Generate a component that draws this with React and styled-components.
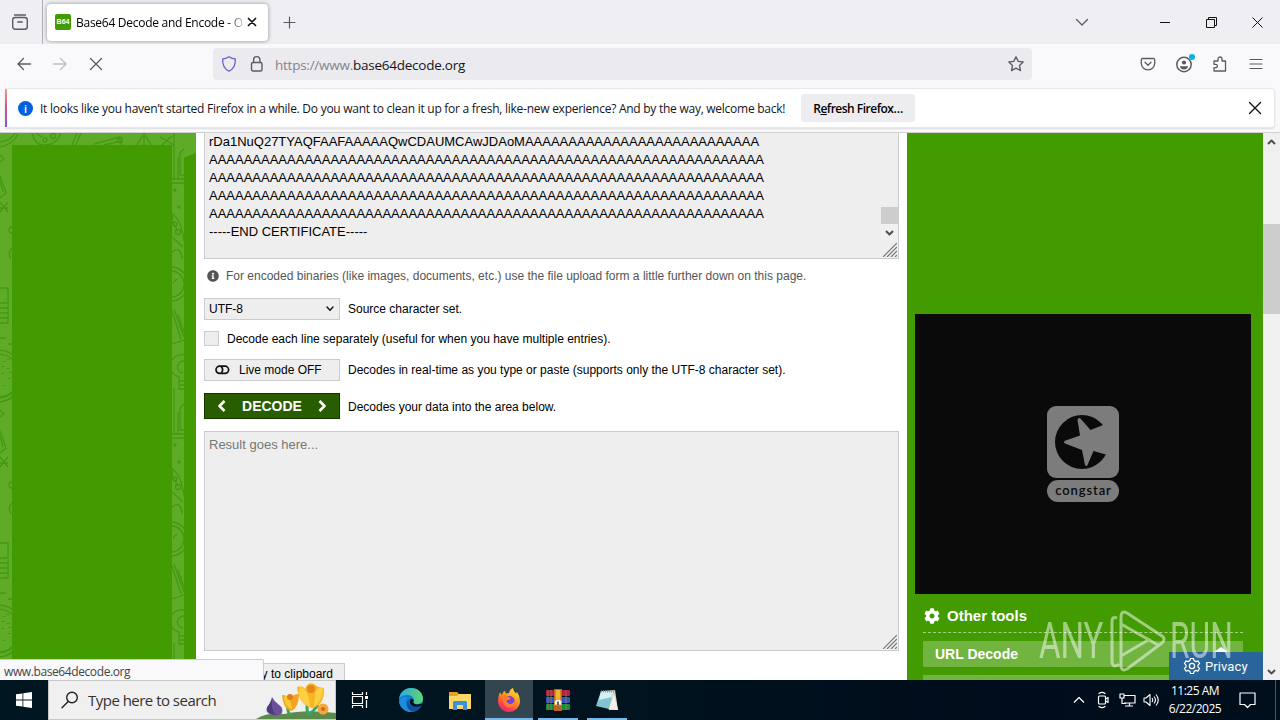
import styled, { createGlobalStyle } from "styled-components"
import { FaInfoCircle, FaCog } from "react-icons/fa"

const LINE = "A".repeat(64)
const CERT = [
  "rDa1NuQ27TYAQFAAFAAAAAQwCDAUMCAwJDAoM" + "A".repeat(27),
  LINE,
  LINE,
  LINE,
  LINE,
  "-----END CERTIFICATE-----",
]

export default function App() {
  return (
    <>
      <GlobalStyle />
      <Screen>
        <TabBar />
        <NavBar />
        <Notification />
        <Viewport>
          <LeftRail />
          <DecodeForm />
          <RightRail />
          <Scrollbar>
            <Arrow up />
            <Thumb />
            <Arrow />
          </Scrollbar>
          <StatusBubble>www.base64decode.org</StatusBubble>
          <Watermark />
        </Viewport>
        <Taskbar />
      </Screen>
    </>
  )
}

function Stroke({ w, h, d, color = "#5b5b66", sw = 1.3, children, cap = "round" }) {
  return (
    <svg width={w} height={h} viewBox={`0 0 ${w} ${h}`} fill="none" stroke={color} strokeWidth={sw} strokeLinecap={cap} strokeLinejoin="round">
      {d && <path d={d} />}
      {children}
    </svg>
  )
}

function Arrow({ up }) {
  return (
    <ArrowBox>
      <Stroke w={9} h={6} d={up ? "M1 5L4.500 1.500L8 5" : "M1 1L4.500 4.500L8 1"} color="#505050" sw={2} cap="butt" />
    </ArrowBox>
  )
}

function TabBar() {
  return (
    <Tabs>
      <FirefoxView>
        <Stroke w={18} h={18} sw={1.4}>
          <path d="M3.500 2H14.500" />
          <rect x="1.700" y="4.500" width="14.600" height="11.800" rx="2.500" />
          <path d="M6.800 9H11.200" />
        </Stroke>
      </FirefoxView>
      <Tab>
        <Favicon>B64</Favicon>
        <TabTitle>Base64 Decode and Encode - O</TabTitle>
        <Stroke w={10} h={10} d="M1.500 1.500L8.500 8.500M8.500 1.500L1.500 8.500" color="#15141a" sw={1.7} />
      </Tab>
      <NewTab>
        <Stroke w={13} h={13} d="M6.500 1V12M1 6.500H12" sw={1.2} />
      </NewTab>
      <ListTabs>
        <Stroke w={14} h={9} d="M1.500 1.500L7 7L12.500 1.500" />
      </ListTabs>
      <WindowButton>
        <Stroke w={11} h={11} d="M0 5.500H10" color="#111" sw={1} cap="butt" />
      </WindowButton>
      <WindowButton>
        <Stroke w={11} h={11} d="M.5 2.500H8.500V10.500H.5ZM2.500 2.500V.5H10.500V8.500H8.500" color="#111" sw={1} cap="butt" />
      </WindowButton>
      <WindowButton>
        <Stroke w={11} h={11} d="M.5 .5L10.500 10.500M10.500 .5L.5 10.500" color="#111" sw={1} cap="butt" />
      </WindowButton>
    </Tabs>
  )
}

function NavBar() {
  return (
    <Nav>
      <NavButton>
        <Stroke w={16} h={14} d="M7.500 1.500L2 7L7.500 12.500M2 7H14.500" />
      </NavButton>
      <NavButton>
        <Stroke w={16} h={14} d="M8.500 1.500L14 7L8.500 12.500M14 7H1.500" color="#bdbdc4" />
      </NavButton>
      <NavButton>
        <Stroke w={14} h={14} d="M1.500 1.500L12.500 12.500M12.500 1.500L1.500 12.500" />
      </NavButton>
      <UrlBar>
        <Stroke w={16} h={18} d="M8 1.700C5.800 3.200 3.800 3.800 1.700 3.900C1.300 9.500 3.300 13.800 8 16.300C12.700 13.800 14.700 9.500 14.300 3.900C12.200 3.800 10.200 3.200 8 1.700Z" color="#6a60c4" />
        <Lock>
          <Stroke w={14} h={18} sw={1.4}>
            <rect x="1.500" y="7.500" width="10.500" height="8.500" rx="1.500" />
            <path d="M3.600 7.500V4.800a3.150 3.150 0 0 1 6.300 0V7.500" />
          </Stroke>
        </Lock>
        <Url>
          <span>https://www.</span>base64decode.org
        </Url>
        <Stroke w={18} h={18} d="M9 1.800L11.200 6.400L16.200 7L12.500 10.500L13.500 15.600L9 13.100L4.500 15.600L5.500 10.500L1.800 7L6.800 6.400Z" />
      </UrlBar>
      <NavTools>
        <NavButton>
          <Stroke w={16} h={16}>
            <path d="M2.500 2.500H13.500a1.200 1.200 0 0 1 1.200 1.200V7.200a6.700 6.700 0 0 1-13.400 0V3.700a1.200 1.200 0 0 1 1.200-1.200Z" />
            <path d="M5 6.300L8 9.200L11 6.300" />
          </Stroke>
        </NavButton>
        <NavButton>
          <Account>
            <Stroke w={18} h={18} sw={1.5}>
              <circle cx="9" cy="9.500" r="7.200" />
              <circle cx="9" cy="7.500" r="2.100" fill="#5b5b66" stroke="none" />
              <path d="M4.800 11.200H13.200C12.800 13.500 11 14.500 9 14.500S5.200 13.500 4.800 11.200Z" fill="#5b5b66" stroke="none" />
            </Stroke>
            <Dot />
          </Account>
        </NavButton>
        <NavButton>
          <Stroke w={16} h={18} d="M2 6H6V4a2 2 0 0 1 4 0V6H13.500V16H2V12.700H3.700a1.700 1.700 0 0 0 0-3.400H2Z" />
        </NavButton>
        <NavButton>
          <Stroke w={14} h={12} d="M1 1.500H13M1 6H13M1 10.500H13" sw={1.2} />
        </NavButton>
      </NavTools>
    </Nav>
  )
}

function Notification() {
  return (
    <NotificationArea>
      <NotificationBar>
        <InfoDot>i</InfoDot>
        <Message>
          It looks like you haven’t started Firefox in a while. Do you want to clean it up for a fresh, like-new experience? And by the way, welcome back!
        </Message>
        <RefreshButton>
          R<u>e</u>fresh Firefox…
        </RefreshButton>
        <Stroke w={14} h={14} d="M1.500 1.500L12.500 12.500M12.500 1.500L1.500 12.500" color="#15141a" sw={1.4} />
      </NotificationBar>
    </NotificationArea>
  )
}

// one tile of the school doodles, repeated down the page every 255px
function Doodles({ y }) {
  return (
    <g transform={`translate(0 ${y})`}>
      <path d="M-2 9Q10 9 15 0M-2 14Q12 13 18 1M0 22L4 26L0 29M0 43L6 60L0 65M0 48L3 59M0 69L8 79M8 69L0 79M0 75H8" />
      <circle cx="12" cy="97" r="3" />
      <path d="M12 115Q7 120 11 126M0 155H8V170H0M0 175H8M0 180H8M0 185H8M0 190H8M8 172V190M0 205H6M8 211H12" />
      <circle cx="-2" cy="243" r="22" />
      <circle cx="-2" cy="243" r="26" />
      <path d="M4 228v1M8 235v1M3 240v1M9 245v1M4 252v1M8 226v1M10 239v1M3 233v1" strokeWidth="2.500" />
      <path d="M174 0V46M178 24V46M184 16L180 20V42H184M172 46H184M172 50H184" />
      <circle cx="175" cy="57" r="1" fill="#459b10" />
      <circle cx="179" cy="74" r="1" fill="#459b10" />
      <path d="M173 82Q181 86 184 108M172 88L178 98M172 104L183 114M172 119Q181 112 182 126M173 80L171 97" />
      <circle cx="178" cy="99" r="2.500" />
      <circle cx="175" cy="91" r="2" />
      <circle cx="171" cy="151" r="17" />
      <circle cx="171" cy="151" r="13" />
      <path d="M173 150L177 146M172 178L181 206M174 176L184 204M172 211L184 207M178 182L184 199" />
      <path d="M184 222A11 11 0 0 0 179 244V256H184M184 228A6 6 0 0 0 183 240M180 248H184M180 252H184" />
    </g>
  )
}

function LeftRail() {
  return (
    <Rail>
      <RailArt width="196" height="547" viewBox="0 0 196 547">
        <path d="M0 0H196V20L184 25V547H0Z" fill="#5eab28" />
        <g fill="none" stroke="#459814" strokeWidth="1.300">
          <Doodles y={0} />
          <Doodles y={255} />
          <Doodles y={510} />
          <path d="M32 0Q35 13 46 12T61 0M36 0L42 4M72 12L77 0M76 12L81 0M94 11L119 4L122 12M104 12L121 8M137 12L144 0L151 12M144 3V12M160 4L174 12M172 3L162 12" />
          <circle cx="45" cy="7" r="2" />
          <circle cx="53" cy="3" r="2.500" />
          <circle cx="120" cy="7" r="2.500" />
        </g>
        <path d="M184 25L196 20V547H184Z" fill="#429b00" />
      </RailArt>
      <AdSlot />
    </Rail>
  )
}

function Grip() {
  return (
    <GripBox>
      <Stroke w={14} h={14} d="M0 14L14 0M4 14L14 4M8 14L14 8M12 14L14 12" color="#777" sw={1.2} cap="butt" />
    </GripBox>
  )
}

function DecodeForm() {
  return (
    <Content>
      <SourceArea>
        <SourceText>
          {CERT.map((line, i) => (
            <div key={i}>{line}</div>
          ))}
        </SourceText>
        <SourceScroll>
          <SourceThumb />
          <Arrow />
        </SourceScroll>
        <Grip />
      </SourceArea>
      <Hint>
        <FaInfoCircle size={12} />
        For encoded binaries (like images, documents, etc.) use the file upload form a little further down on this page.
      </Hint>
      <Row>
        <Control>
          UTF-8
          <Stroke w={8} h={6} d="M1 1L4 4.200L7 1" color="#111" sw={1.4} />
        </Control>
        Source character set.
      </Row>
      <CheckRow>
        <Checkbox />
        Decode each line separately (useful for when you have multiple entries).
      </CheckRow>
      <Row>
        <Control $live>
          <Stroke w={15} h={10} color="#111" sw={1.700}>
            <rect x="1" y="1.200" width="12.600" height="7.200" rx="3.600" />
            <path d="M6.300 1.600Q9 4.800 6.300 8" />
          </Stroke>
          Live mode OFF
        </Control>
        Decodes in real-time as you type or paste (supports only the UTF-8 character set).
      </Row>
      <Row>
        <DecodeButton>
          <Stroke w={10} h={14} d="M7.500 2L2.500 7L7.500 12" color="#fff" sw={2.500} cap="butt" />
          DECODE
          <Stroke w={10} h={14} d="M2.500 2L7.500 7L2.500 12" color="#fff" sw={2.500} cap="butt" />
        </DecodeButton>
        <ButtonNote>Decodes your data into the area below.</ButtonNote>
      </Row>
      <ResultArea>
        Result goes here...
        <Grip />
      </ResultArea>
      <CopyButton>Copy to clipboard</CopyButton>
    </Content>
  )
}

function RightRail() {
  return (
    <Sidebar>
      <Banner>
        <svg width="72" height="96" viewBox="0 0 72 96">
          <rect width="72" height="72" rx="9" fill="#7c7c7c" />
          <circle cx="35" cy="36" r="27" fill="#0a0a0a" />
          <path d="M57.500 18.500L62 30V44L60.500 49L46.500 45L40.500 59Q39.500 61 38 59L35 44L18 37.500Q16 36 18 34.800L33 29.500L30.500 14Q31 11 33.500 12.500L43.500 24Z" fill="#7c7c7c" />
          <rect y="74" width="72" height="22" rx="11" fill="#7c7c7c" />
        </svg>
        <BannerName>congstar</BannerName>
      </Banner>
      <ToolsTitle>
        <FaCog size={16} />
        Other tools
      </ToolsTitle>
      <ToolLink>URL Decode</ToolLink>
      <ToolLink />
      <Privacy>
        <Stroke w={18} h={18} color="#fff" sw={1.200}>
          <path d="M7.500 1.500H10.500L11.100 3.600L13 4.600L15 3.900L16.600 6.500L15 8V10L16.600 11.500L15 14.100L13 13.400L11.100 14.400L10.500 16.500H7.500L6.900 14.400L5 13.400L3 14.100L1.400 11.500L3 10V8L1.400 6.500L3 3.900L5 4.600L6.900 3.600Z" />
          <circle cx="9" cy="9" r="2.600" />
        </Stroke>
        Privacy
      </Privacy>
    </Sidebar>
  )
}

function Watermark() {
  return (
    <Brand>
      <BrandWord $scale={0.66}>ANY</BrandWord>
      <svg width="60" height="64" viewBox="0 0 60 64" fill="none" stroke="#fff" strokeWidth="3" strokeLinejoin="round">
        <path d="M11 9Q6 7 6 12V52Q6 59 12 56L13 55" />
        <path d="M15 47V8Q15 1 21 4L56 27M15 15L52 36M56 27Q60 30 56 34L21 60Q15 63 15 56V47L44 30" strokeWidth="3" />
      </svg>
      <BrandWord $scale={0.635}>RUN</BrandWord>
    </Brand>
  )
}

function Taskbar() {
  return (
    <Bar>
      <Start>
        <svg width="16" height="16" viewBox="0 0 16 16" fill="#fff">
          <path d="M0 2.300L6.500 1.400V7.600H0ZM7.300 1.300L16 0V7.600H7.300ZM0 8.400H6.500V14.600L0 13.700ZM7.300 8.400H16V16L7.300 14.700Z" />
        </svg>
      </Start>
      <Search>
        <Stroke w={18} h={18} color="#222" sw={1.400}>
          <circle cx="11" cy="6.500" r="5.300" />
          <path d="M7.200 10.500L1 16.800" />
        </Stroke>
        <span>Type here to search</span>
        <Crocus />
      </Search>
      <TaskView>
        <Stroke w={18} h={16} color="#fff" sw={1.200} cap="butt">
          <path d="M1.500 0V2.500H11.500V0M1.500 16V13.500H11.500V16M15.500 0V3M15.500 8V16" />
          <rect x="1.500" y="4.500" width="10" height="7" />
          <path d="M14 5.500H17" strokeWidth="3" />
        </Stroke>
      </TaskView>
      <Apps>
        <AppButton><Edge /></AppButton>
        <AppButton><Folder /></AppButton>
        <AppButton $active $bar={48}><Firefox /></AppButton>
        <AppButton $bar={40}><Rar /></AppButton>
        <AppButton $bar={40}><Notepad /></AppButton>
      </Apps>
      <Tray>
        <TrayIcon>
          <Stroke w={12} h={8} d="M1 6.500L6 1.500L11 6.500" color="#fff" sw={1.200} cap="butt" />
        </TrayIcon>
        <TrayIcon>
          <Stroke w={14} h={18} color="#fff" sw={1.200}>
            <rect x="2.500" y="5" width="7" height="8" rx="1" />
            <path d="M9.500 8L12 6.500V11.500L9.500 10M3 2.500Q6 .3 9 2.500M3 15.500Q6 17.700 9 15.500" />
          </Stroke>
        </TrayIcon>
        <TrayIcon>
          <Stroke w={17} h={14} color="#fff" sw={1.200} cap="butt">
            <path d="M5 2.500H16V10H5M10.500 10V13M6 13H14M3 5V10.500H7" />
            <rect x="1" y="1" width="4" height="4" />
          </Stroke>
        </TrayIcon>
        <TrayIcon>
          <Stroke w={17} h={14} color="#fff" sw={1.100} cap="butt">
            <path d="M1 5H3L7 1.500V12.500L3 9H1ZM9 5Q10.500 7 9 9M11 3.500Q14 7 11 10.500M13 1.500Q17.500 7 13 12.500" />
          </Stroke>
        </TrayIcon>
      </Tray>
      <Clock>
        <div>11:25 AM</div>
        <div>6/22/2025</div>
      </Clock>
      <ActionCenter>
        <Stroke w={17} h={17} d="M1 1H16V12.500H11.500L8.500 15.500L5.500 12.500H1Z" color="#fff" sw={1.200} />
      </ActionCenter>
      <ShowDesktop />
    </Bar>
  )
}

function Crocus() {
  return (
    <CrocusArt width="80" height="38" viewBox="0 0 80 38">
      <path d="M0 38Q12 31 28 33Q50 28 80 32V38Z" fill="#5c8a4c" />
      <path d="M34 34Q30 28 33 24M52 34Q50 26 52 18M52 34Q58 30 62 24" stroke="#3fa35a" strokeWidth="3" fill="none" />
      <path d="M16 16Q18 20 22 23Q29 28 25 33Q19 37 12 32Q8 27 14 23Z" fill="#6b4f9b" />
      <path d="M16 18Q15 27 19 34Q10 32 11 27Z" fill="#4e3a7d" />
      <path d="M26 14Q31 14 34 18Q37 13 43 13Q43 27 35 30Q27 28 26 14Z" fill="#f4a51c" />
      <path d="M29 14Q35 18 36 28Q29 26 28 17Z" fill="#fbc934" />
      <circle cx="34" cy="16" r="3" fill="#e07d1d" />
      <path d="M41 6Q47 4 49 8Q52 0 58 3Q62 7 68 7Q69 23 57 27Q43 25 41 6Z" fill="#f8b51f" />
      <path d="M44 5Q54 11 54 26Q43 22 43 10ZM59 12Q61 6 67 6Q67 20 58 26Z" fill="#fdd043" />
      <circle cx="55" cy="8" r="4" fill="#e7841d" />
      <circle cx="67" cy="28" r="5.500" fill="#f3a63c" />
      <circle cx="67" cy="28" r="2" fill="#c9681e" />
    </CrocusArt>
  )
}

function Edge() {
  return (
    <svg width="24" height="24" viewBox="0 0 24 24">
      <defs>
        <linearGradient id="edgeTop" x1="0" x2="1">
          <stop offset="0" stopColor="#2aa7e8" />
          <stop offset="1" stopColor="#5fd86a" />
        </linearGradient>
      </defs>
      <circle cx="12" cy="12" r="12" fill="#1479d0" />
      <path d="M0 11C1 4 6 0 12 0C19 0 24 5 24 10.500C24 14 21 16 18 16C15 16 13.500 15 14.500 13.500C16 11 13 7 9 7C5 7 1 8.500 0 11Z" fill="url(#edgeTop)" />
      <path d="M9 9.500C5 13 7 21 15 23.500C8 25 2 21 .3 15C0 11 4 8 9 9.500Z" fill="#1b8ee0" />
      <path d="M10 11C8 16 13 20 22 18C19 23 15 24 13 23.500C7 21 6 15 10 11Z" fill="#12509c" />
      <path d="M12 10.500Q16 11 14.300 14.200Q14.500 16 18 16.500L23.500 15.500L22.500 18Q14 20 11.500 16Q9.500 13 12 10.500Z" fill="#00151f" />
    </svg>
  )
}

function Folder() {
  return (
    <svg width="22" height="19" viewBox="0 0 22 19">
      <path d="M0 1H8L10 3H22V18H0Z" fill="#e8a21b" />
      <path d="M0 5H8L10 3H22V18H0Z" fill="#fcd667" />
      <path d="M4 18V11.500Q4 10 5.500 10H16.500Q18 10 18 11.500V19H14V14H8V19H4Z" fill="#3d91d0" />
    </svg>
  )
}

function Firefox() {
  return (
    <svg width="24" height="24" viewBox="0 0 24 24">
      <defs>
        <linearGradient id="fox" x1=".8" y1="0" x2=".25" y2="1">
          <stop offset="0" stopColor="#ffe83c" />
          <stop offset=".45" stopColor="#ff9420" />
          <stop offset=".8" stopColor="#fb3b52" />
          <stop offset="1" stopColor="#e2257e" />
        </linearGradient>
      </defs>
      <path d="M3 4Q4 6 5 7Q6 3 8 3L9 5.500Q11 5 12 5Q13 1 16 0Q16 3 19 5.500L20 4Q23 8 23 13C23 19 18 24 12 24S1 19 1 13Q1 8 3 4Z" fill="url(#fox)" />
      <circle cx="12.500" cy="13" r="5" fill="#7543d8" />
      <path d="M5 9Q10 7 14 10.500Q12 12 10 12Q9 15 13 16Q16 16 17.500 13Q18 19 12.500 19.500Q6 19 5 9Z" fill="#ff7a30" />
    </svg>
  )
}

function Rar() {
  return (
    <svg width="24" height="22" viewBox="0 0 24 22">
      <rect y="1" width="24" height="6" rx="1" fill="#b3203a" />
      <rect y="8" width="24" height="6" rx="1" fill="#3554b8" />
      <rect y="15" width="24" height="6" rx="1" fill="#1d8a35" />
      <path d="M2 1V21M5 1V21M20 1V21" stroke="#9c9470" strokeWidth=".6" />
      <rect x="8" y="0" width="8" height="22" fill="#b9622a" />
      <rect x="9.500" y="1" width="5" height="10" fill="#f0b52d" />
      <path d="M8.500 16V12Q12 8 15.500 12V16Z" fill="#fff" stroke="#d8963a" />
      <path d="M12 12.500V16" stroke="#333" strokeWidth="1.500" />
    </svg>
  )
}

function Notepad() {
  return (
    <svg width="24" height="24" viewBox="0 0 24 24">
      <path d="M7 3L20 2L23 22H14Z" fill="#d9d3be" />
      <path d="M6 3L18 4L14 21L1 18Z" fill="#7fc4cf" />
      <path d="M6 3L18 4L17 9L4 12Z" fill="#d5f0f2" />
      <path d="M14 21L19 6L23 22Z" fill="#f4f1e6" />
      <path d="M6 3.500H19" stroke="#8a9aa0" strokeWidth="2" strokeDasharray="1 1" />
    </svg>
  )
}

const GlobalStyle = createGlobalStyle`
  * {
    box-sizing: border-box;
  }
  body {
    margin: 0;
    overflow: hidden;
  }
  svg {
    display: block;
    flex: none;
  }
`
const ui = `"Open Sans", "Noto Sans", sans-serif`

const Screen = styled.div`
  width: 1280px;
  height: 720px;
  display: flex;
  flex-direction: column;
  overflow: hidden;
  font-family: "Liberation Sans", Arial, sans-serif;
  font-size: 12px;
  color: #000;
  white-space: nowrap;
  background: #fff;
`
const Tabs = styled.header`
  height: 44px;
  flex: none;
  display: flex;
  align-items: center;
  background: #eeeef3;
  font-family: ${ui};
`
const FirefoxView = styled.div`
  width: 43px;
  height: 44px;
  display: flex;
  align-items: center;
  justify-content: center;
  padding-right: 3px;
  border-right: 1px solid #b0b0b8;
`
const Tab = styled.div`
  width: 221px;
  height: 37px;
  margin-left: 4px;
  padding: 0 11px 0 8px;
  display: flex;
  align-items: center;
  background: #fff;
  border-radius: 4px;
  box-shadow: 0 0 4px rgba(0, 0, 0, 0.4);
`
const Favicon = styled.div`
  width: 16px;
  height: 16px;
  flex: none;
  border-radius: 2px;
  background: #429b00;
  color: #fff;
  font: bold 7px/16px "Liberation Sans", Arial, sans-serif;
  text-align: center;
`
const TabTitle = styled.div`
  width: 166px;
  margin: 0 5px;
  overflow: hidden;
  font-size: 12px;
  letter-spacing: -0.27px;
  mask-image: linear-gradient(to right, #000 150px, transparent 172px);
`
const NewTab = styled.div`
  margin-left: 15px;
`
const ListTabs = styled.div`
  margin-left: auto;
  margin-right: 53px;
`
const WindowButton = styled.div`
  width: 46px;
  height: 30px;
  display: flex;
  align-items: center;
  justify-content: center;
`
const Nav = styled.nav`
  height: 44px;
  flex: none;
  display: flex;
  align-items: center;
  padding: 0 6px 4px 6px;
  background: #f9f9fb;
  font-family: ${ui};
`
const NavButton = styled.div`
  width: 36px;
  display: flex;
  justify-content: center;
`
const UrlBar = styled.div`
  width: 819px;
  height: 32px;
  margin-left: 99px;
  padding: 0 7px 0 8px;
  display: flex;
  align-items: center;
  border-radius: 4px;
  background: #ebebef;
`
const Lock = styled.div`
  margin: 0 11px 0 13px;
`
const Url = styled.div`
  flex: 1;
  padding-top: 1px;
  font-size: 13.500px;
  letter-spacing: -0.25px;
  color: #15141a;
  span {
    color: #83838c;
  }
`
const NavTools = styled.div`
  margin-left: auto;
  display: flex;
  align-items: center;
`
const Account = styled.div`
  position: relative;
`
const Dot = styled.i`
  position: absolute;
  top: -1px;
  right: -2px;
  width: 6px;
  height: 6px;
  border-radius: 50%;
  background: #00b3e0;
`
const NotificationArea = styled.section`
  height: 45px;
  flex: none;
  padding: 0 5px 0 5px;
  background: #f9f9fb;
  border-bottom: 1px solid #cfcfd4;
`
const NotificationBar = styled.div`
  height: 40px;
  display: flex;
  align-items: center;
  padding: 0 12px 0 13px;
  border: 1px solid #e8e8ec;
  border-left: 0;
  border-radius: 0 4px 4px 0;
  background: linear-gradient(#f5a080, #d0558f 45%, #8f52c4) left / 2px 100% no-repeat #fff;
  box-shadow: 0 1px 2px rgba(0, 0, 0, 0.12);
  font-family: ${ui};
`
const InfoDot = styled.div`
  width: 15px;
  height: 15px;
  border-radius: 50%;
  background: #0061e0;
  color: #fff;
  font-size: 11px;
  font-weight: 600;
  line-height: 15px;
  text-align: center;
`
const Message = styled.p`
  width: 768px;
  margin: 0;
  padding: 0 0 0 7px;
  font-size: 12px;
  letter-spacing: -0.26px;
  color: #15141a;
`
const RefreshButton = styled.div`
  width: 114px;
  height: 28px;
  margin-right: auto;
  border-radius: 3px;
  background: #ededf0;
  font-size: 12px;
  font-weight: 600;
  letter-spacing: -0.5px;
  line-height: 29px;
  text-align: center;
`
const Viewport = styled.main`
  position: relative;
  height: 547px;
  flex: none;
  display: flex;
  overflow: hidden;
`
const Rail = styled.aside`
  position: relative;
  width: 196px;
  padding: 12px 24px 0 12px;
  background: #429b00;
`
const RailArt = styled.svg`
  position: absolute;
  inset: 0;
`
const AdSlot = styled.div`
  position: relative;
  height: 100%;
  background: #429b00;
`
const Content = styled.section`
  width: 711px;
  padding: 0 8px;
  overflow: hidden;
`
const Area = styled.div`
  position: relative;
  border: 1px solid #ccc;
  background: #eee;
  padding-left: 4px;
  font-size: 13px;
  line-height: 18px;
`
const SourceArea = styled(Area)`
  height: 126px;
  border-top: 0;
  display: flex;
  justify-content: space-between;
`
const SourceText = styled.div`
  height: 108px;
`
const SourceScroll = styled.div`
  width: 17px;
  padding-top: 74px;
  height: 108px;
  background: linear-gradient(#eee 74px, #f0f0f0 0);
`
const SourceThumb = styled.div`
  height: 17px;
  background: #cdcdcd;
`
const ArrowBox = styled.div`
  height: 17px;
  display: flex;
  align-items: center;
  justify-content: center;
`
const GripBox = styled.div`
  position: absolute;
  right: 1px;
  bottom: 1px;
`
const Hint = styled.p`
  margin: 9px 0 15px;
  padding-left: 3px;
  height: 15px;
  display: flex;
  align-items: center;
  gap: 7px;
  color: #555;
`
const Row = styled.div`
  display: flex;
  align-items: center;
  gap: 8px;
  margin-bottom: 12px;
`
const CheckRow = styled(Row)`
  height: 15px;
  margin: -1px 0 13px;
`
const Checkbox = styled.div`
  width: 15px;
  height: 15px;
  border: 1px solid #ccc;
  background: #eee;
`
const Control = styled.div`
  width: 136px;
  height: 22px;
  display: flex;
  align-items: center;
  justify-content: ${(props) => (props.$live ? "flex-start" : "space-between")};
  gap: 9px;
  padding: ${(props) => (props.$live ? "0 0 0 10px" : "0 5px 0 4px")};
  border: 1px solid #ccc;
  background: #eee;
`
const DecodeButton = styled.div`
  width: 136px;
  height: 26px;
  display: flex;
  align-items: center;
  justify-content: space-between;
  padding: 0 12px;
  border: 1px solid #143000;
  background: #285d00;
  color: #fff;
  font-size: 14px;
  font-weight: bold;
`
const ButtonNote = styled.span`
  padding-top: 2px;
`
const ResultArea = styled(Area)`
  height: 220px;
  padding-top: 4px;
  color: #777;
`
const CopyButton = styled.div`
  width: 141px;
  height: 22px;
  margin-top: 12px;
  padding-right: 11px;
  border: 1px solid #ccc;
  background: #eee;
  line-height: 20px;
  text-align: right;
`
const Sidebar = styled.aside`
  position: relative;
  width: 356px;
  padding: 181px 12px 0 8px;
  background: #429b00;
`
const Banner = styled.div`
  position: relative;
  height: 280px;
  display: flex;
  justify-content: center;
  padding-top: 92px;
  background: #0a0a0a;
`
const BannerName = styled.div`
  position: absolute;
  top: 167px;
  left: 132px;
  width: 73px;
  font: 600 13px/18px Lato, sans-serif;
  letter-spacing: 0.9px;
  text-align: center;
  color: #0a0a0a;
`
const ToolsTitle = styled.h3`
  height: 39px;
  margin: 0 8px 8px;
  padding: 5px 0 0 1px;
  display: flex;
  align-items: center;
  gap: 7px;
  border-bottom: 1px dashed #a9d08a;
  color: #fff;
  font-size: 15px;
`
const ToolLink = styled.div`
  height: 26px;
  margin: 0 0 8px 8px;
  width: 320px;
  padding-left: 12px;
  background: #71b440;
  color: #fff;
  font-size: 14px;
  font-weight: bold;
  line-height: 26px;
`
const Privacy = styled.div`
  position: absolute;
  right: 0;
  bottom: 0;
  width: 94px;
  height: 28px;
  display: flex;
  align-items: center;
  padding-left: 14px;
  gap: 4px;
  background: #29649a;
  color: #fff;
  font: 13px Roboto, sans-serif;
  letter-spacing: 0.1px;
  &::before {
    content: "";
    position: absolute;
    top: -5px;
    left: 45px;
    border: solid transparent;
    border-width: 0 7px 5px;
    border-bottom-color: #fff;
  }
`
const Scrollbar = styled.div`
  width: 17px;
  display: flex;
  flex-direction: column;
  background: #f0f0f0;
`
const Thumb = styled.div`
  height: 90px;
  margin: 74px 0 auto;
  background: #cdcdcd;
`
const StatusBubble = styled.div`
  position: absolute;
  left: 0;
  bottom: 0;
  width: 264px;
  height: 21px;
  padding-left: 4px;
  border: solid #ccc;
  border-width: 1px 1px 0 0;
  border-radius: 0 2px 0 0;
  background: #f9f9fb;
  color: #444;
  font: 12px/24px ${ui};
  letter-spacing: -0.4px;
`
const Brand = styled.div`
  position: absolute;
  left: 1039px;
  top: 476px;
  display: flex;
  align-items: center;
  gap: 4px;
  opacity: 0.5;
`
const BrandWord = styled.span`
  width: 63px;
  color: #fff;
  font: 400 50px/60px Roboto, sans-serif;
  transform: scaleX(${(props) => props.$scale});
  transform-origin: left;
`
const Bar = styled.footer`
  height: 40px;
  flex: none;
  display: flex;
  align-items: center;
  background: linear-gradient(to right, #001720, #00131f 50%, #000c1b 80%, #000f1c);
  font-family: ${ui};
  color: #fff;
`
const Start = styled.div`
  width: 48px;
  display: flex;
  justify-content: center;
`
const Search = styled.div`
  position: relative;
  width: 288px;
  height: 40px;
  display: flex;
  align-items: center;
  gap: 9px;
  padding-left: 12px;
  border: 1px solid #c8c8c8;
  background: #f0f0f0;
  color: #333;
  font-size: 15px;
  letter-spacing: -0.52px;
`
const CrocusArt = styled.svg`
  position: absolute;
  right: -1px;
  bottom: 0;
`
const TaskView = styled.div`
  width: 48px;
  display: flex;
  justify-content: center;
`
const Apps = styled.div`
  display: flex;
  gap: 1px;
  margin-left: 3px;
`
const AppButton = styled.div`
  width: 48px;
  height: 40px;
  display: flex;
  align-items: center;
  justify-content: center;
  background: linear-gradient(#76b9ed, #76b9ed) bottom / ${(props) => props.$bar || 0}px 2px no-repeat
    ${(props) => (props.$active ? "#33464f" : "transparent")};
`
const Tray = styled.div`
  margin-left: auto;
  display: flex;
`
const TrayIcon = styled.div`
  width: 24px;
  height: 40px;
  display: flex;
  align-items: center;
  justify-content: center;
`
const Clock = styled.div`
  width: 64px;
  font-size: 12px;
  line-height: 18px;
  letter-spacing: -0.5px;
  text-align: center;
`
const ActionCenter = styled.div`
  width: 48px;
  padding-left: 12px;
`
const ShowDesktop = styled.div`
  width: 5px;
  height: 40px;
  border-left: 1px solid #4b5661;
`
